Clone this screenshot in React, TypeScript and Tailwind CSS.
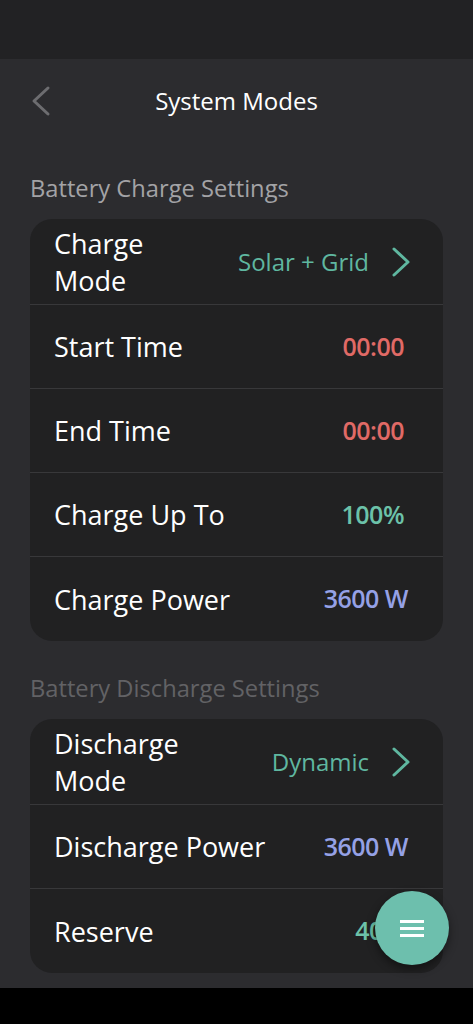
type Row = {
    label: string;
    value: string;
    color: string;
    bold?: boolean;
    link?: boolean;
    wide?: boolean;
};

const chargeRows: Row[] = [
    { label: 'Charge Mode', value: 'Solar + Grid', color: 'text-[#5fb7a0]', link: true },
    { label: 'Start Time', value: '00:00', color: 'text-[#e06a66]', bold: true },
    { label: 'End Time', value: '00:00', color: 'text-[#e06a66]', bold: true },
    { label: 'Charge Up To', value: '100%', color: 'text-[#6cc2a9]', bold: true },
    { label: 'Charge Power', value: '3600 W', color: 'text-[#95a1e6]', bold: true, wide: true },
];

const dischargeRows: Row[] = [
    { label: 'Discharge Mode', value: 'Dynamic', color: 'text-[#5fb7a0]', link: true },
    { label: 'Discharge Power', value: '3600 W', color: 'text-[#95a1e6]', bold: true, wide: true },
    { label: 'Reserve', value: '40%', color: 'text-[#6cc2a9]', bold: true },
];

const Chevron = ({ left, className }: { left?: boolean; className: string }) => (
    <svg width="20" height="32" viewBox="0 0 20 32" className={className}>
        <polyline
            points={left ? '17,3 3,16 17,29' : '3,3 17,16 3,29'}
            fill="none"
            stroke="currentColor"
            strokeWidth="3"
            strokeLinecap="round"
            strokeLinejoin="round"
        />
    </svg>
);

const SettingRow = ({ row, first, last }: { row: Row; first: boolean; last: boolean }) => (
    <div
        className={`flex items-center justify-between pl-6 ${
            first ? 'h-[86px]' : 'h-[84px]'
        } ${row.link ? 'pr-[32px]' : row.wide ? 'pr-[35px]' : 'pr-[39px]'} ${
            last ? '' : 'border-b border-[#38383a]'
        }`}
    >
        <span
            className={`text-white text-[27px] leading-[37px] ${
                row.link ? 'w-[150px]' : ''
            }`}
        >
            {row.label}
        </span>
        <div className="flex items-center">
            <span
                className={`${row.color} ${
                    row.bold
                        ? 'text-[25px] font-semibold tracking-[-0.5px]'
                        : 'text-[24px]'
                }`}
            >
                {row.value}
            </span>
            {row.link && <Chevron className="ml-[22px] text-[#5fb7a0]" />}
        </div>
    </div>
);

const Section = ({
    title,
    rows,
    titleColor,
}: {
    title: string;
    rows: Row[];
    titleColor: string;
}) => (
    <div className="flex flex-col">
        <h2 className={`text-[23.7px] ${titleColor} pl-[30px] leading-[32px] mb-[15px]`}>
            {title}
        </h2>
        <div className="mx-[30px] rounded-[22px] bg-[#212122] overflow-hidden">
            {rows.map((r, i) => (
                <SettingRow
                    key={r.label}
                    row={r}
                    first={i === 0}
                    last={i === rows.length - 1}
                />
            ))}
        </div>
    </div>
);

const App = () => {
    return (
        <div
            className="relative w-[473px] h-[1024px] bg-[#2c2c2f] flex flex-col overflow-hidden"
            style={{ fontFamily: '"Open Sans", "Noto Sans", sans-serif' }}
        >
            <div className="h-[59px] bg-[#222224] shrink-0" />

            <div className="relative flex items-center justify-center h-[84px]">
                <Chevron left className="absolute left-[31px] top-1/2 -translate-y-1/2 text-[#6d6d70]" />
                <h1 className="text-white text-[24px]">System Modes</h1>
            </div>

            <div className="flex flex-col gap-[31px] pt-[29px]">
                <Section
                    title="Battery Charge Settings"
                    rows={chargeRows}
                    titleColor="text-[#a3a3a6]"
                />
                <Section
                    title="Battery Discharge Settings"
                    rows={dischargeRows}
                    titleColor="text-[#626265]"
                />
            </div>

            <div className="absolute left-0 right-0 bottom-0 h-[36px] bg-black" />

            <button className="absolute left-[375px] top-[891px] w-[74px] h-[74px] rounded-full bg-[#6dbfad] flex items-center justify-center shadow-[0_4px_10px_rgba(0,0,0,0.45)]">
                <div className="flex flex-col gap-[4px]">
                    <span className="block w-[24px] h-[3px] bg-white" />
                    <span className="block w-[24px] h-[3px] bg-white" />
                    <span className="block w-[24px] h-[3px] bg-white" />
                </div>
            </button>
        </div>
    );
};

export default App;
